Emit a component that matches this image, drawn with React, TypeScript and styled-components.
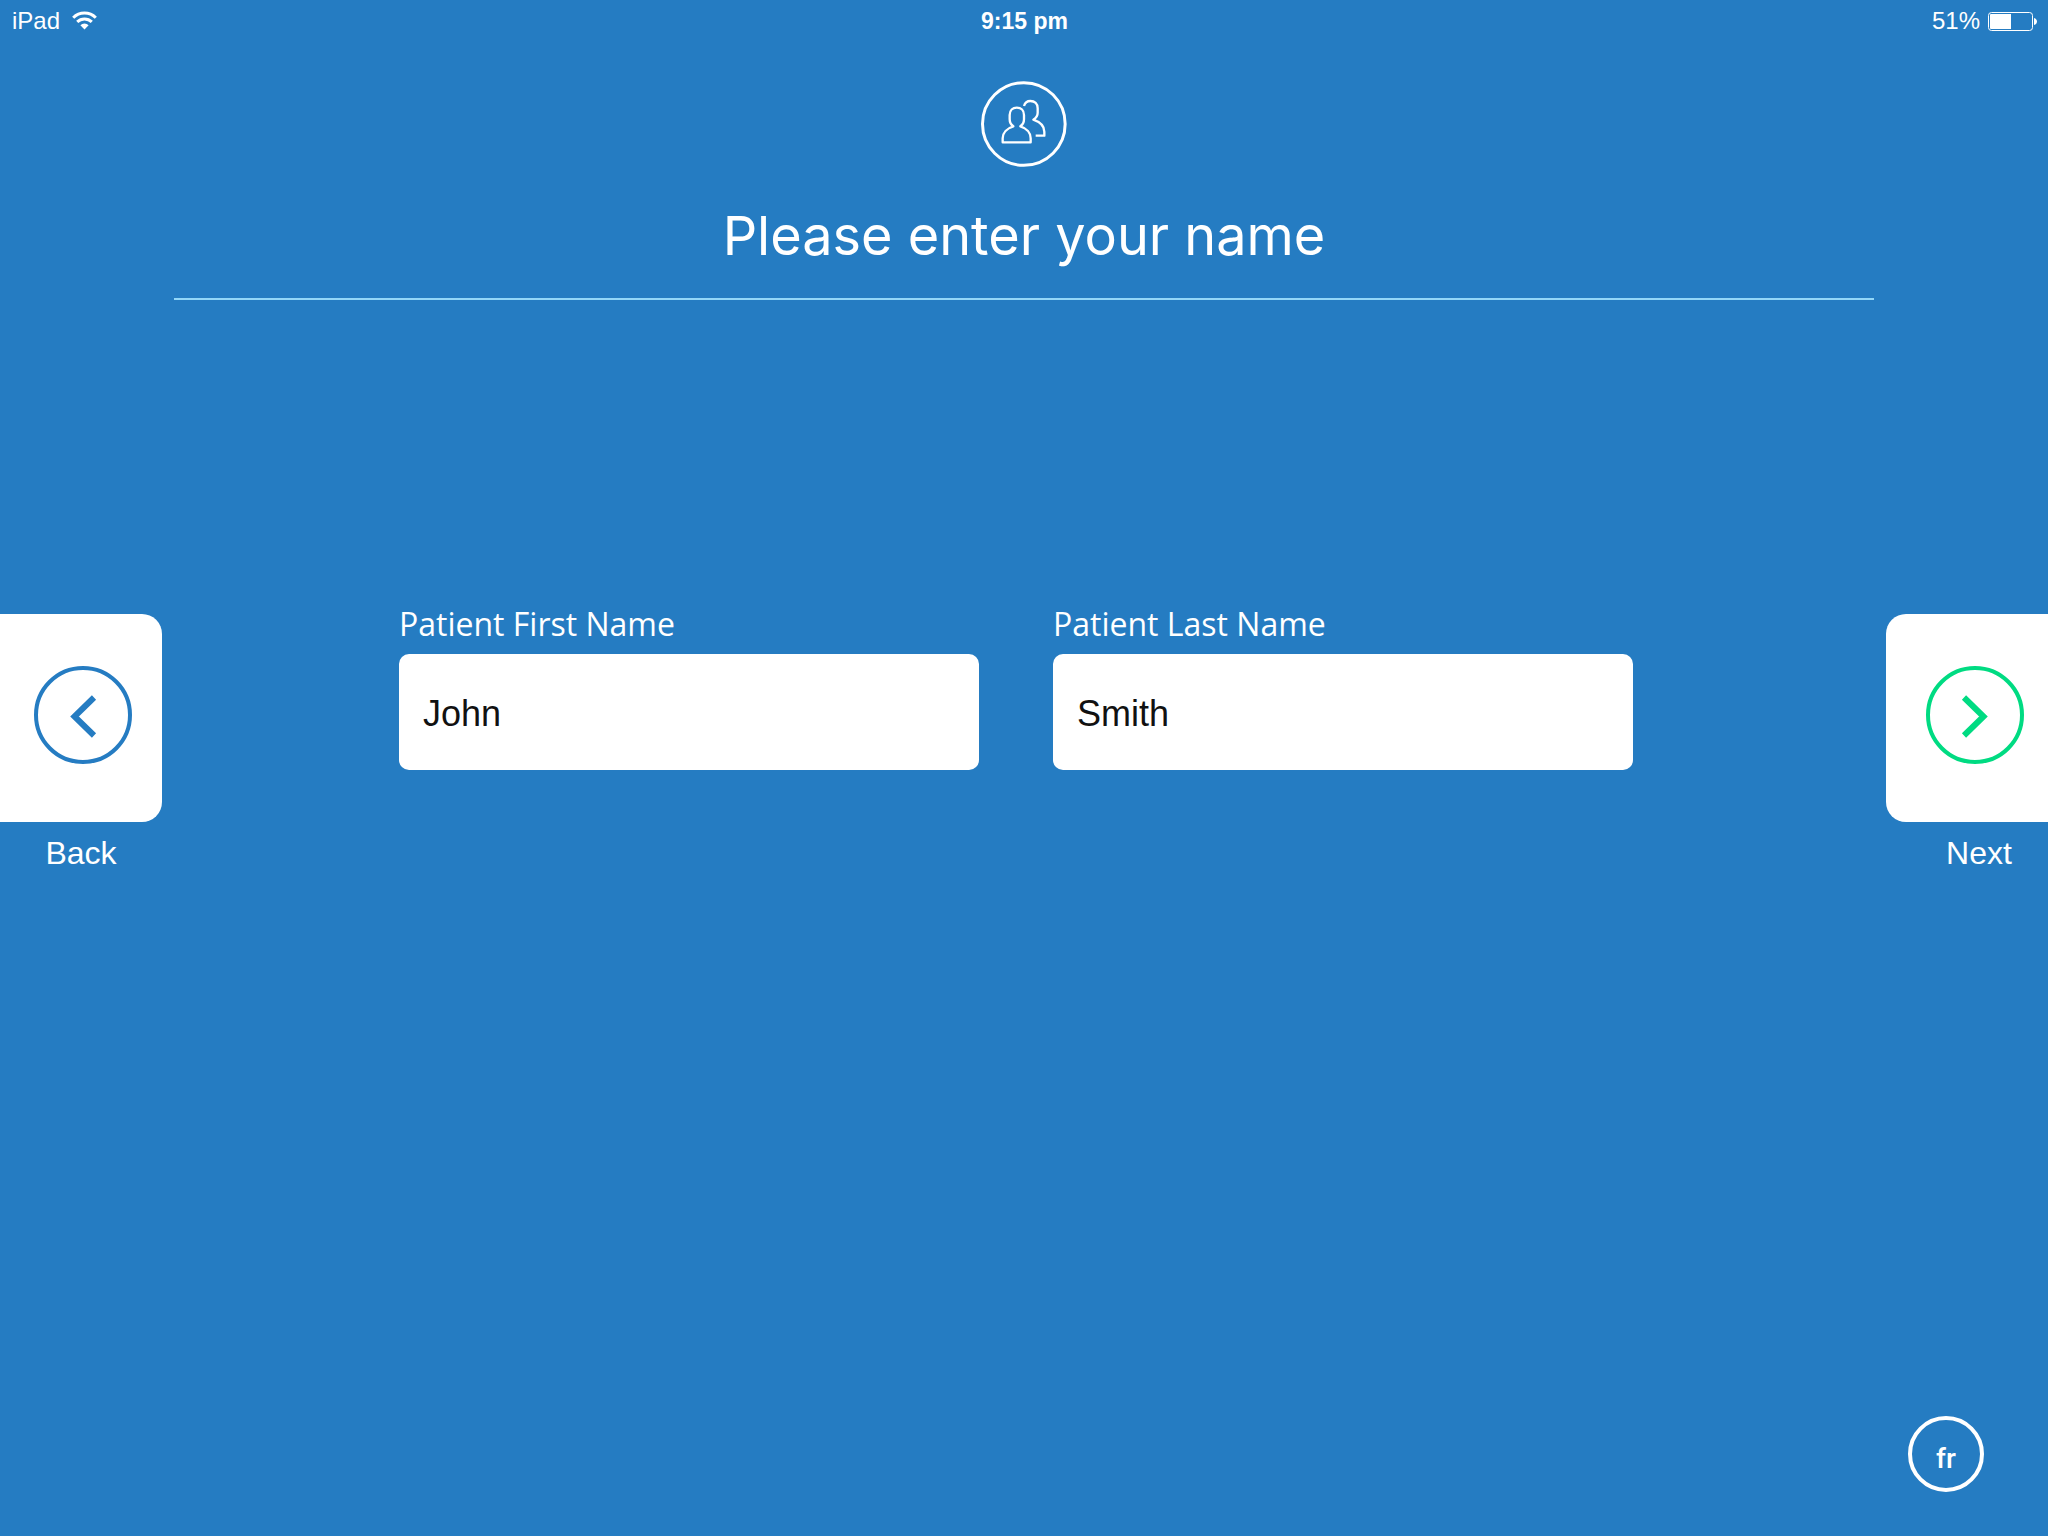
import React, { useState } from "react";
import styled, { createGlobalStyle } from "styled-components";

const blue = "#257cc2";
const green = "#00db82";
const sans = '"Liberation Sans", Arial, sans-serif';

const GlobalStyle = createGlobalStyle`
  *, *::before, *::after { box-sizing: border-box; }
  body { margin: 0; background: ${blue}; color: #fff; font-family: ${sans}; }
  button, input { font: inherit; color: inherit; }
`;

const Page = styled.div`
  display: flex;
  flex-direction: column;
  min-height: 100vh;
`;

const StatusBar = styled.div`
  display: grid;
  grid-template-columns: 1fr auto 1fr;
  align-items: center;
  height: 42px;
  padding: 0 11px 0 12px;
  font-size: 24px;
  line-height: 28px;
`;

const StatusGroup = styled.div<{ $end?: boolean }>`
  display: flex;
  align-items: center;
  justify-content: ${(p) => (p.$end ? "flex-end" : "flex-start")};
  gap: ${(p) => (p.$end ? 8 : 12)}px;
`;

const Clock = styled.time`
  font-size: 23px;
  font-weight: 700;
`;

const Header = styled.header`
  display: flex;
  flex-direction: column;
  align-items: center;
  margin: 39px 174px 0;
  padding-bottom: 28px;
  border-bottom: 2px solid #93d7f8;
`;

const Title = styled.h1`
  margin: 35px 0 0;
  font-family: Inter, sans-serif;
  font-size: 54px;
  font-weight: 400;
  line-height: 68px;
`;

const Stage = styled.main`
  display: grid;
  grid-template-columns: 162px 1fr 162px;
  align-items: start;
  margin-top: 302px;
`;

const NavButton = styled.button`
  display: flex;
  flex-direction: column;
  gap: 11px;
  margin-top: 12px;
  padding: 0;
  border: 0;
  background: none;
  cursor: pointer;
`;

const NavCard = styled.span<{ $next?: boolean }>`
  display: flex;
  width: 100%;
  padding: ${(p) => (p.$next ? "52px 24px 58px 40px" : "52px 30px 58px 34px")};
  border-radius: ${(p) => (p.$next ? "20px 0 0 20px" : "0 20px 20px 0")};
  background: #fff;
  color: ${(p) => (p.$next ? green : blue)};
`;

const NavLabel = styled.span<{ $next?: boolean }>`
  width: 100%;
  padding-left: ${(p) => (p.$next ? 24 : 0)}px;
  font-size: 32px;
  line-height: 40px;
  text-align: center;
`;

const Form = styled.form`
  display: grid;
  grid-template-columns: 1fr 1fr;
  gap: 74px;
  padding: 0 253px 0 237px;
`;

const Field = styled.div`
  display: flex;
  flex-direction: column;
  gap: 8px;
`;

const FieldLabel = styled.label`
  font-family: "Open Sans", sans-serif;
  font-size: 32px;
  line-height: 44px;
`;

const TextInput = styled.input`
  width: 100%;
  height: 116px;
  padding: 4px 24px 0;
  border: 0;
  border-radius: 10px;
  background: #fff;
  color: #111;
  font-size: 36px;
`;

const Footer = styled.footer`
  display: flex;
  justify-content: flex-end;
  margin-top: auto;
  padding: 0 64px 44px;
`;

const LanguageButton = styled.button`
  width: 76px;
  height: 76px;
  padding: 8px 0 0;
  border: 4px solid #fff;
  border-radius: 50%;
  background: none;
  font-family: Roboto, sans-serif;
  font-size: 28px;
  font-weight: 500;
  cursor: pointer;
`;

const WifiIcon = () => (
  <svg width="25" height="21" viewBox="0 0 25 21" fill="none" stroke="#fff" strokeWidth="3" role="img" aria-label="Wi-Fi">
    <path d="M1.200 6.700a16 16 0 0 1 22.600 0" />
    <path d="M5.200 10.900a10.400 10.400 0 0 1 14.600 0" />
    <path d="M12.500 18.400L8.400 14.200a5.800 5.800 0 0 1 8.200 0z" fill="#fff" stroke="none" />
  </svg>
);

const BatteryIcon = () => (
  <svg width="49" height="19" viewBox="0 0 49 19" role="img" aria-label="Battery">
    <rect x=".5" y=".5" width="44" height="18" rx="3" fill="none" stroke="#fff" />
    <path d="M2 3a1 1 0 0 1 1-1h20v15H3a1 1 0 0 1-1-1zM46 6c4 1 4 6 0 7z" fill="#fff" />
  </svg>
);

const PeopleIcon = () => (
  <svg width="86" height="86" viewBox="64 243 258 258" fill="none" stroke="#fff" aria-hidden="true">
    <circle cx="192.500" cy="372" r="124" strokeWidth="9" />
    <g strokeWidth="7" strokeLinejoin="round">
      <path d="M129 427H213V415C213 399 201 385 182 379C188 375 193 368 193 358V345C193 331 184 323 171.500 323C159 323 150 331 150 345V358C150 368 155 375 161 379C142 385 129 399 129 415Z" />
      <path d="M193 318C196 308 202 303 212 303C225 303 234 311 234 325V338C234 347 229 354 221 359C241 366 254 378 254 395V407H228" />
    </g>
  </svg>
);

const ArrowIcon = ({ next }: { next?: boolean }) => (
  <svg width="98" height="98" viewBox="0 0 98 98" fill="none" stroke="currentColor" aria-hidden="true">
    <circle cx="49" cy="49" r="47" strokeWidth="4" />
    <path d={next ? "M38 31.500L57.500 50.500L38 69.500" : "M60 31.500L40.500 50.500L60 69.500"} strokeWidth="6" />
  </svg>
);

export default function App() {
  const [first, setFirst] = useState("John");
  const [last, setLast] = useState("Smith");

  return (
    <Page>
      <GlobalStyle />
      <StatusBar>
        <StatusGroup>
          <span>iPad</span>
          <WifiIcon />
        </StatusGroup>
        <Clock>9:15 pm</Clock>
        <StatusGroup $end>
          <span>51%</span>
          <BatteryIcon />
        </StatusGroup>
      </StatusBar>
      <Header>
        <PeopleIcon />
        <Title>Please enter your name</Title>
      </Header>
      <Stage>
        <NavButton type="button">
          <NavCard>
            <ArrowIcon />
          </NavCard>
          <NavLabel>Back</NavLabel>
        </NavButton>
        <Form>
          <Field>
            <FieldLabel htmlFor="first-name">Patient First Name</FieldLabel>
            <TextInput id="first-name" value={first} onChange={(e) => setFirst(e.target.value)} />
          </Field>
          <Field>
            <FieldLabel htmlFor="last-name">Patient Last Name</FieldLabel>
            <TextInput id="last-name" value={last} onChange={(e) => setLast(e.target.value)} />
          </Field>
        </Form>
        <NavButton type="button">
          <NavCard $next>
            <ArrowIcon next />
          </NavCard>
          <NavLabel $next>Next</NavLabel>
        </NavButton>
      </Stage>
      <Footer>
        <LanguageButton type="button" lang="fr">fr</LanguageButton>
      </Footer>
    </Page>
  );
}
